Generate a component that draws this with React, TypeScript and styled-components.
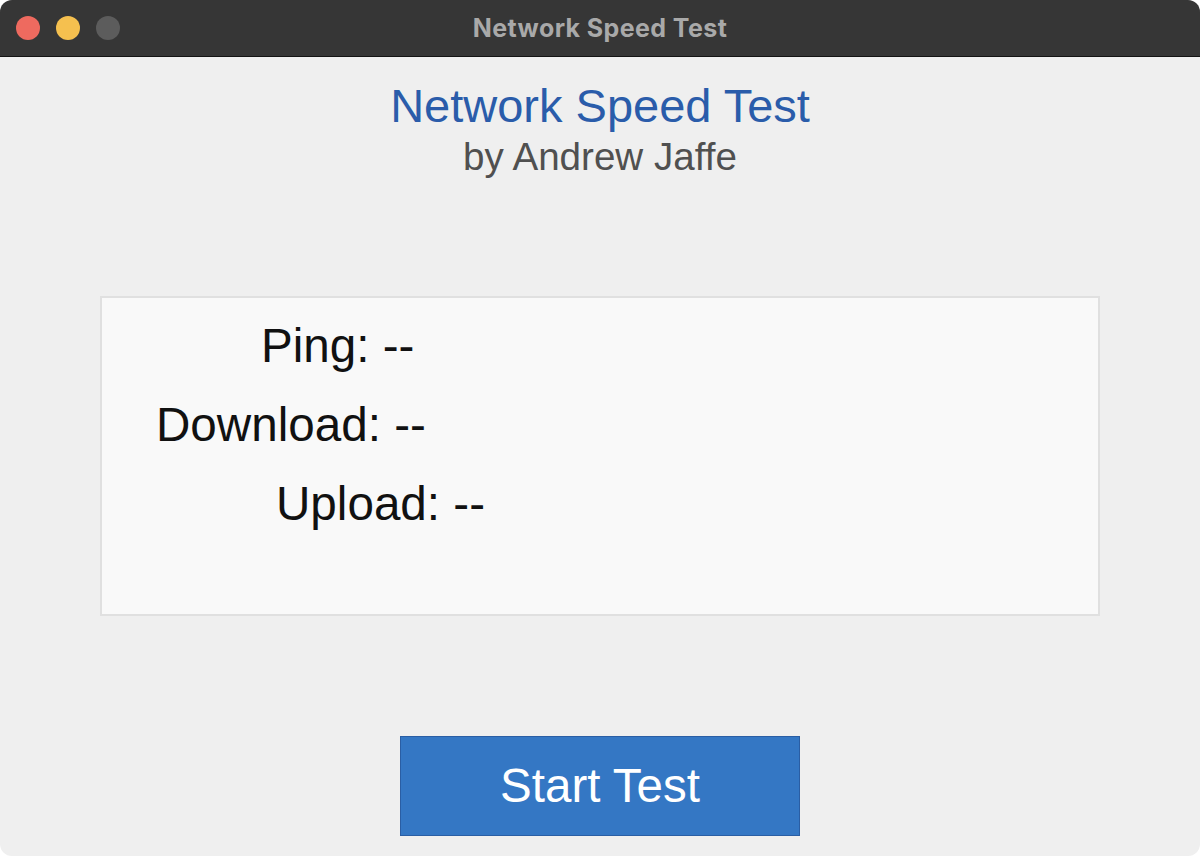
import React from "react";
import styled, { createGlobalStyle } from "styled-components";

const GlobalStyle = createGlobalStyle`
  html, body {
    margin: 0;
    padding: 0;
    background: #ffffff;
  }
  * { box-sizing: border-box; }
`;

const Window = styled.div`
  width: 1200px;
  height: 856px;
  border-radius: 12px;
  overflow: hidden;
  background: #efefef;
  display: flex;
  flex-direction: column;
`;

const TitleBar = styled.div`
  height: 57px;
  flex: none;
  background: #363636;
  border-bottom: 1px solid #141414;
  display: grid;
  grid-template-columns: 1fr auto 1fr;
  align-items: center;
`;

const Lights = styled.div`
  display: flex;
  gap: 16px;
  padding-left: 16px;
`;

const Light = styled.span<{ $color: string }>`
  width: 24px;
  height: 24px;
  border-radius: 50%;
  background: ${(p) => p.$color};
`;

const WindowTitle = styled.div`
  font-family: Inter, "Liberation Sans", sans-serif;
  font-weight: 700;
  font-size: 25px;
  letter-spacing: 0.4px;
  line-height: 25px;
  color: #a9a9a9;
`;

const Content = styled.main`
  flex: 1;
  display: flex;
  flex-direction: column;
  align-items: center;
  font-family: "Liberation Sans", Arial, sans-serif;
`;

const Heading = styled.h1`
  margin: 25px 0 0;
  font-weight: 400;
  font-size: 47px;
  line-height: 1;
  color: #2a5caa;
`;

const Byline = styled.div`
  margin-top: 9px;
  font-size: 38.6px;
  line-height: 38px;
  color: #505050;
`;

const Panel = styled.section`
  margin-top: 120px;
  width: 1000px;
  height: 320px;
  background: #f9f9f9;
  border: 2px solid #e0e0e0;
  padding-top: 8px;
  display: flex;
  flex-direction: column;
`;

const StatRow = styled.div<{ $indent: number }>`
  padding-left: ${(p) => p.$indent}px;
  font-size: 47.6px;
  line-height: 79px;
  color: #111111;
  white-space: pre;
`;

const StartButton = styled.button`
  margin-top: 120px;
  width: 400px;
  height: 100px;
  background: #3477c4;
  border: 1px solid #2a5ea4;
  border-radius: 0;
  padding: 0;
  color: #ffffff;
  font-family: "Liberation Sans", Arial, sans-serif;
  font-size: 47.5px;
  line-height: 98px;
  cursor: pointer;
`;

const stats = [
  { label: "Ping", value: "--", indent: 159 },
  { label: "Download", value: "--", indent: 54 },
  { label: "Upload", value: "--", indent: 174 },
];

export default function App() {
  return (
    <>
      <GlobalStyle />
      <Window>
        <TitleBar>
          <Lights>
            <Light $color="#ee6a5f" />
            <Light $color="#f5c04f" />
            <Light $color="#5c5c5c" />
          </Lights>
          <WindowTitle>Network Speed Test</WindowTitle>
          <div />
        </TitleBar>
        <Content>
          <Heading>Network Speed Test</Heading>
          <Byline>by Andrew Jaffe</Byline>
          <Panel>
            {stats.map((s) => (
              <StatRow key={s.label} $indent={s.indent}>
                {s.label}: {s.value}
              </StatRow>
            ))}
          </Panel>
          <StartButton>Start Test</StartButton>
        </Content>
      </Window>
    </>
  );
}
